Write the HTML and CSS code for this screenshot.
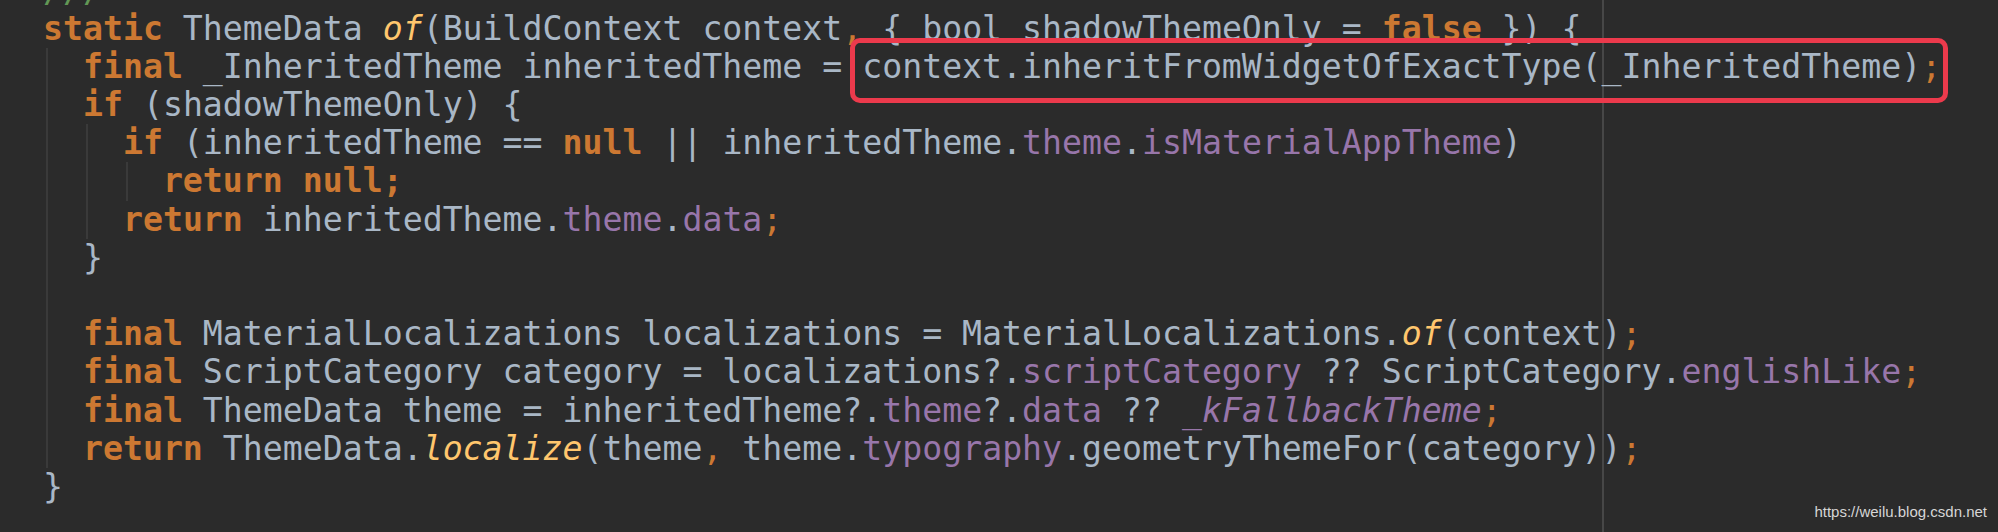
FILE: index.html
```html
<!DOCTYPE html>
<html>
<head>
<meta charset="utf-8">
<link rel="stylesheet" href="styles.css">
</head>
<body>
<div class="editor">
  <div class="code">
    <div class="line"><span class="doc">///</span></div>
    <div class="line"><span class="kw">static</span> ThemeData <span class="fn">of</span>(BuildContext context<span class="pn">,</span> { bool shadowThemeOnly = <span class="kw">false</span> }) {</div>
    <div class="block g0">
      <div class="line">  <span class="kw">final</span> _InheritedTheme inheritedTheme = <span class="mark">context.inheritFromWidgetOfExactType(_InheritedTheme)<span class="pn">;</span></span></div>
      <div class="line">  <span class="kw">if</span> (shadowThemeOnly) {</div>
      <div class="block g1">
        <div class="line">    <span class="kw">if</span> (inheritedTheme == <span class="kw">null</span> || inheritedTheme.<span class="fd">theme</span>.<span class="fd">isMaterialAppTheme</span>)</div>
        <div class="block g2">
          <div class="line">      <span class="kw">return null;</span></div>
        </div>
        <div class="line">    <span class="kw">return</span> inheritedTheme.<span class="fd">theme</span>.<span class="fd">data</span><span class="pn">;</span></div>
      </div>
      <div class="line">  }</div>
      <div class="line"> </div>
      <div class="line">  <span class="kw">final</span> MaterialLocalizations localizations = MaterialLocalizations.<span class="fn">of</span>(context)<span class="pn">;</span></div>
      <div class="line">  <span class="kw">final</span> ScriptCategory category = localizations?.<span class="fd">scriptCategory</span> ?? ScriptCategory.<span class="fd">englishLike</span><span class="pn">;</span></div>
      <div class="line">  <span class="kw">final</span> ThemeData theme = inheritedTheme?.<span class="fd">theme</span>?.<span class="fd">data</span> ?? <span class="sf">_kFallbackTheme</span><span class="pn">;</span></div>
      <div class="line">  <span class="kw">return</span> ThemeData.<span class="fn">localize</span>(theme<span class="pn">,</span> theme.<span class="fd">typography</span>.geometryThemeFor(category))<span class="pn">;</span></div>
    </div>
    <div class="line">}</div>
  </div>
  <div class="watermark">https://weilu.blog.csdn.net</div>
</div>
</body>
</html>
```

FILE: styles.css
```css
html, body {
  margin: 0;
  padding: 0;
  background: #2b2b2b;
}

.editor {
  position: relative;
  width: 1998px;
  height: 532px;
  overflow: hidden;
  background:
    linear-gradient(#474747, #474747) 1602px 0 / 2px 100% no-repeat,
    #2b2b2b;
}

.code {
  margin-top: -28.5px;
  padding-left: 43px;
  font-family: "DejaVu Sans Mono", "Liberation Mono", monospace;
  font-size: 33.2px;
  line-height: 38.2px;
  color: #a9b7c6;
}

.line {
  height: 38.2px;
  white-space: pre;
}

.block {
  background-repeat: no-repeat;
  background-size: 2px 100%;
  background-image: linear-gradient(#3a3a3a, #3a3a3a);
}

.g0 { background-position: 3px 0; }
.g1 { background-position: 43px 0; }
.g2 { background-position: 83px 0; }

.kw {
  color: #cc7832;
  font-weight: bold;
}

.pn {
  color: #cc7832;
}

.fn {
  color: #ffc66d;
  font-style: italic;
}

.fd {
  color: #9876aa;
}

.sf {
  color: #9876aa;
  font-style: italic;
}

.doc {
  color: #629755;
}

.mark {
  position: relative;
}

.mark::after {
  content: "";
  position: absolute;
  left: -12px;
  right: -7px;
  top: -9px;
  bottom: -17px;
  border: 5px solid #ec3a4c;
  border-radius: 10px;
  pointer-events: none;
}

.watermark {
  position: absolute;
  right: 11px;
  top: 503px;
  font-family: "Liberation Sans", Arial, sans-serif;
  font-size: 15px;
  line-height: 17px;
  color: #d6d6d6;
}
```
